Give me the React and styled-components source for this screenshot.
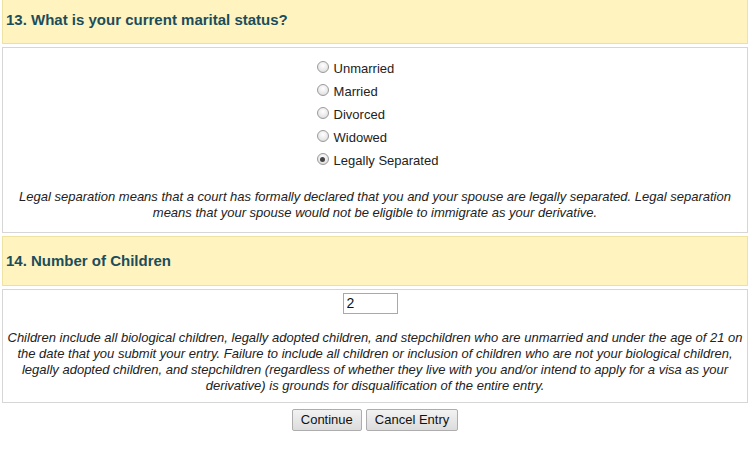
import React from "react";
import styled, { createGlobalStyle } from "styled-components";

const Global = createGlobalStyle`
  html, body { margin: 0; padding: 0; background: #fff; }
  body { font-family: "Liberation Sans", Arial, sans-serif; color: #222; }
`;

const Page = styled.div`
  width: 746px;
  margin-left: 2px;
  margin-top: -6px;
  display: flex;
  flex-direction: column;
  gap: 3px;
`;

const Header = styled.div`
  background: #fff4bf;
  border: 1px solid #efe3a4;
  border-bottom-color: #dcdcdc;
  height: 50px;
  display: flex;
  align-items: center;
  padding-left: 3px;
  box-sizing: border-box;
`;

const Title = styled.h2`
  margin: 0;
  font-size: 15px;
  font-weight: bold;
  color: #1b4d5c;
`;

const Panel = styled.div`
  border: 1px solid #d6d6d6;
  background: #fff;
  box-sizing: border-box;
  padding: ${(p) => p.$pad};
  display: flex;
  flex-direction: column;
  align-items: center;
`;

const RadioGroup = styled.div`
  display: flex;
  flex-direction: column;
  gap: 5px;
  margin-left: 5px;
`;

const RadioRow = styled.label`
  display: flex;
  align-items: center;
  font-size: 13px;
  line-height: 18px;
  color: #222;
`;

const Radio = styled.span`
  width: 12px;
  height: 12px;
  border-radius: 50%;
  box-sizing: border-box;
  border: 1px solid #9a9a9a;
  background: radial-gradient(circle at 50% 35%, #ffffff 0%, #e8e8e8 60%, #cfcfcf 100%);
  margin-right: 5px;
  margin-top: -4px;
  position: relative;
  &::after {
    content: "";
    display: ${(p) => (p.$checked ? "block" : "none")};
    position: absolute;
    left: 2.5px;
    top: 2.5px;
    width: 5px;
    height: 5px;
    border-radius: 50%;
    background: #444;
  }
`;

const Note = styled.p`
  margin: ${(p) => p.$m};
  font-style: italic;
  font-size: 13px;
  line-height: 16.3px;
  text-align: center;
  color: #222;
`;

const NumberInput = styled.input`
  width: 55px;
  height: 21px;
  box-sizing: border-box;
  border: 1px solid #a9a9a9;
  font-family: "Liberation Sans", Arial, sans-serif;
  font-size: 14px;
  padding: 0 3px;
  color: #111;
  margin-left: -10px;
`;

const Actions = styled.div`
  display: flex;
  justify-content: center;
  gap: 4px;
  margin-top: 3px;
  margin-left: 0px;
`;

const Button = styled.button`
  font-family: "Liberation Sans", Arial, sans-serif;
  font-size: 13px;
  color: #111;
  height: 22px;
  padding: 0 8px;
  border: 1px solid #adadad;
  border-radius: 2px;
  background: linear-gradient(#f2f2f2, #dcdcdc);
`;

const options = ["Unmarried", "Married", "Divorced", "Widowed", "Legally Separated"];

export default function App() {
  return (
    <>
      <Global />
      <Page>
        <Header>
          <Title>13. What is your current marital status?</Title>
        </Header>
        <Panel $pad="12px 8px 10px">
          <RadioGroup>
            {options.map((o) => (
              <RadioRow key={o}>
                <Radio $checked={o === "Legally Separated"} />
                {o}
              </RadioRow>
            ))}
          </RadioGroup>
          <Note $m="19px 0 0">
            Legal separation means that a court has formally declared that you and your spouse are legally separated. Legal separation means that your spouse would not be eligible to immigrate as your derivative.
          </Note>
        </Panel>
        <Header>
          <Title>14. Number of Children</Title>
        </Header>
        <Panel $pad="3px 4px 7px">
          <NumberInput defaultValue="2" />
          <Note $m="16px 0 0">
            Children include all biological children, legally adopted children, and stepchildren who are unmarried and under the age of 21 on the date that you submit your entry. Failure to include all children or inclusion of children who are not your biological children, legally adopted children, and stepchildren (regardless of whether they live with you and/or intend to apply for a visa as your derivative) is grounds for disqualification of the entire entry.
          </Note>
        </Panel>
        <Actions>
          <Button>Continue</Button>
          <Button>Cancel Entry</Button>
        </Actions>
      </Page>
    </>
  );
}
